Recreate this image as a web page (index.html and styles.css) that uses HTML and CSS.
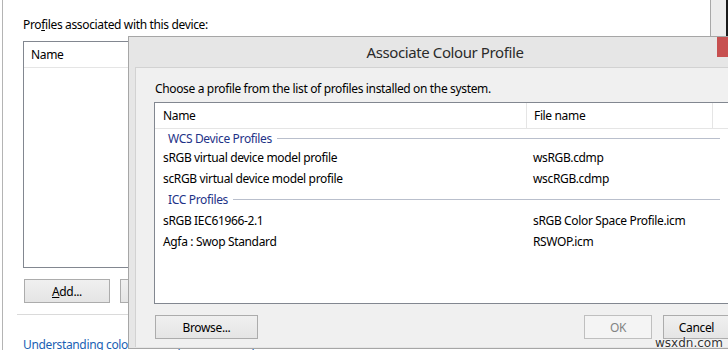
FILE: index.html
```html
<!DOCTYPE html>
<html lang="en">
<head>
    <meta charset="UTF-8">
    <title>Associate Colour Profile</title>
    <link rel="stylesheet" href="styles.css">
</head>
<body>
    <div class="window">
        <div class="label">Pro<u>f</u>iles associated with this device:</div>
        <div class="list">
            <div class="list-header">
                <span>Name</span>
            </div>
        </div>
        <div class="actions">
            <button class="btn"><u>A</u>dd...</button>
            <button class="btn">Remove</button>
        </div>
        <div class="separator"></div>
        <a class="link" href="#">Understanding colour management settings</a>
    </div>

    <div class="scroll-edge"></div>

    <div class="dialog">
        <div class="titlebar">
            <span class="title">Associate Colour Profile</span>
            <div class="close"></div>
        </div>
        <div class="client">
            <div class="intro">Choose a profile from the list of profiles installed on the system.</div>
            <div class="profiles">
                <div class="cols head">
                    <span class="col-name">Name</span>
                    <span class="col-file">File name</span>
                    <span class="col-rest"></span>
                </div>
                <div class="group first"><span>WCS Device Profiles</span></div>
                <div class="cols row">
                    <span class="col-name">sRGB virtual device model profile</span>
                    <span class="col-file">wsRGB.cdmp</span>
                </div>
                <div class="cols row">
                    <span class="col-name">scRGB virtual device model profile</span>
                    <span class="col-file">wscRGB.cdmp</span>
                </div>
                <div class="group"><span>ICC Profiles</span></div>
                <div class="cols row">
                    <span class="col-name">sRGB IEC61966-2.1</span>
                    <span class="col-file">sRGB Color Space Profile.icm</span>
                </div>
                <div class="cols row">
                    <span class="col-name">Agfa : Swop Standard</span>
                    <span class="col-file">RSWOP.icm</span>
                </div>
            </div>
            <div class="dialog-buttons">
                <button class="btn browse">Browse...</button>
                <button class="btn ok" disabled>OK</button>
                <button class="btn cancel">Cancel</button>
            </div>
        </div>
    </div>

    <div class="watermark">wsxdn.com</div>
</body>
</html>
```

FILE: styles.css
```css
body {
    margin: 0;
    width: 728px;
    height: 350px;
    overflow: hidden;
    position: relative;
    background: #ffffff;
    font-family: "Noto Sans", "Open Sans", sans-serif;
    font-size: 12px;
    letter-spacing: -0.35px;
    color: #000000;
}
.window {
    margin-left: 2px;
    height: 350px;
    border-left: 1px solid #b4b4b4;
    padding: 17px 0 0 20px;
    box-sizing: border-box;
}
.label {
    line-height: 16px;
}
.list {
    margin-top: 8px;
    width: 700px;
    height: 227px;
    border: 1px solid #828790;
    box-sizing: border-box;
}
.list-header {
    height: 25px;
    border-bottom: 1px solid #e5e5e5;
    display: flex;
    align-items: center;
    padding-left: 7px;
}
.actions {
    margin-top: 11px;
    display: flex;
    gap: 10px;
    padding-left: 1px;
}
.btn {
    height: 24px;
    width: 86px;
    padding: 0;
    font-family: inherit;
    font-size: 12px;
    letter-spacing: inherit;
    color: #000000;
    border: 1px solid #acacac;
    background: linear-gradient(#f0f0f0, #e5e5e5);
}
.separator {
    margin: 11px 0 0 -6px;
    height: 1px;
    background: #dadada;
}
.link {
    display: block;
    margin-top: 22px;
    line-height: 16px;
    color: #1a5fb4;
    text-decoration: none;
    white-space: nowrap;
}
.scroll-edge {
    position: absolute;
    left: 710px;
    top: 0;
    width: 15px;
    height: 40px;
    border-left: 1px solid #a8a8a8;
    border-right: 2px solid #1a1a1a;
    background: #ececec;
}
.dialog {
    position: absolute;
    left: 128px;
    top: 36px;
    width: 628px;
    height: 313px;
    border: 1px solid #a6a6a6;
    box-sizing: border-box;
    background: #e6e6e6;
    display: flex;
    flex-direction: column;
}
.titlebar {
    height: 30px;
    display: flex;
    align-items: center;
    justify-content: center;
    position: relative;
}
.title {
    font-size: 15px;
    letter-spacing: -0.4px;
    color: #2b2b2b;
    padding-left: 6px;
}
.close {
    position: absolute;
    right: 8px;
    top: 0;
    width: 30px;
    height: 20px;
    background: #c75050;
}
.client {
    flex: 1;
    margin: 0 6px 1px 6px;
    border-left: 1px solid #d2d2d2;
    border-top: 1px solid #d2d2d2;
    background: #f0f0f0;
    padding: 13px 19px 0 18px;
    display: flex;
    flex-direction: column;
}
.intro {
    line-height: 16px;
    padding-left: 1px;
}
.profiles {
    margin-top: 5px;
    height: 202px;
    border: 1px solid #828790;
    box-sizing: border-box;
    background: #ffffff;
}
.cols {
    display: flex;
    height: 21px;
    align-items: center;
}
.col-name {
    width: 371px;
    padding-left: 8px;
    box-sizing: border-box;
    white-space: nowrap;
}
.col-file {
    width: 186px;
    padding-left: 7px;
    box-sizing: border-box;
    white-space: nowrap;
}
.head {
    height: 25px;
    border-bottom: 1px solid #e5e5e5;
    align-items: stretch;
}
.head span {
    display: flex;
    align-items: center;
}
.head .col-file,
.head .col-rest {
    border-left: 1px solid #e5e5e5;
}
.head .col-rest {
    flex: 1;
}
.group {
    height: 21px;
    display: flex;
    align-items: center;
    padding: 0 9px 0 13px;
    color: #1e3287;
    gap: 5px;
}
.group.first {
    height: 18px;
}
.group::after {
    content: "";
    flex: 1;
    height: 1px;
    background: #b9bfcc;
}
.dialog-buttons {
    margin-top: 11px;
    display: flex;
    gap: 11px;
    padding-left: 1px;
}
.browse {
    width: 103px;
    margin-right: auto;
}
.ok {
    width: 68px;
    color: #838383;
    border-color: #bfbfbf;
    background: #f4f4f4;
}
.cancel {
    width: 67px;
}
.watermark {
    position: absolute;
    left: 655px;
    top: 336px;
    font-family: "DejaVu Sans", sans-serif;
    font-size: 12px;
    letter-spacing: 0;
    color: #333333;
    text-shadow: 0 0 2px #ffffff, 0 0 2px #ffffff;
}
```
